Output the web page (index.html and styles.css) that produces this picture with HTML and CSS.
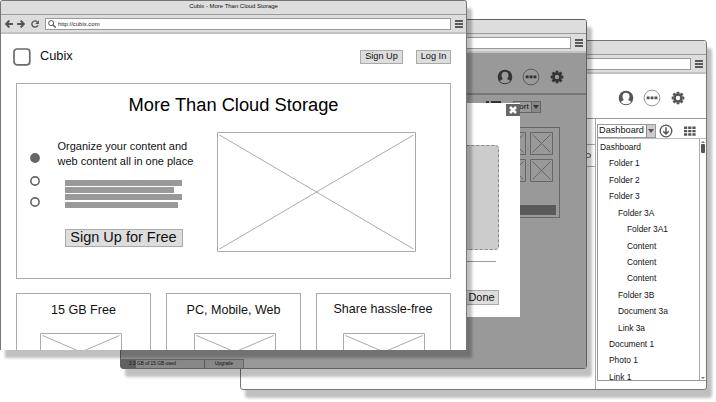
FILE: index.html
```html
<!DOCTYPE html>
<html lang="en">
<head>
<meta charset="utf-8">
<title>Cubix - More Than Cloud Storage</title>
<link rel="stylesheet" href="styles.css">
</head>
<body>
<svg class="defs" width="0" height="0" aria-hidden="true">
  <symbol id="user" viewBox="0 0 16 16"><path fill-rule="evenodd" d="M8 .7a7.300 7.300 0 1 0 0 14.600A7.300 7.300 0 0 0 8 .7zm0 2c2.300 0 3.500 1.500 3.500 3.700 0 1.600-.6 2.600-1.400 3.400.3.900 2.200.9 3.100 2.100A6.300 6.300 0 0 1 8 14.300a6.300 6.300 0 0 1-5.200-2.400c.9-1.200 2.800-1.200 3.100-2.100C5.100 9 4.500 8 4.500 6.400c0-2.200 1.200-3.700 3.500-3.700z" fill="currentColor"/></symbol>
  <symbol id="more" viewBox="0 0 18 18"><circle cx="9" cy="9" r="7.900" fill="none" stroke="currentColor" stroke-width=".6"/><path d="M3.700 7.500h2.900v2.800H3.700zM7.600 7.500h2.900v2.800H7.600zM11.500 7.500h2.900v2.800h-2.900z" fill="currentColor"/></symbol>
  <symbol id="gear" viewBox="0 0 16 16"><circle cx="8" cy="8" r="3.500" fill="none" stroke="currentColor" stroke-width="2.600"/><path d="M8 1.700v2M8 12.300v2M1.700 8h2M12.300 8h2M3.500 3.500l1.500 1.500M11 11l1.500 1.500M3.500 12.500l1.500-1.500M11 5l1.500-1.500" stroke="currentColor" stroke-width="2.800"/></symbol>
  <symbol id="arrow" viewBox="0 0 8 8"><path d="M4.300.6 1.100 4l3.200 3.400M1.200 4H8" fill="none" stroke="currentColor" stroke-width="2"/></symbol>
  <symbol id="reload" viewBox="0 0 8 8"><path d="M6.900 5.200A3.100 3.100 0 1 1 6.300 1.900" fill="none" stroke="currentColor" stroke-width="1.400"/><path d="M7.900.3v3.700H4.300z" fill="currentColor"/></symbol>
  <symbol id="search" viewBox="0 0 8 8"><circle cx="3.100" cy="3.100" r="2.500" fill="none" stroke="currentColor"/><path d="m4.900 4.900 2.800 2.600" stroke="currentColor" stroke-width="1.400"/></symbol>
  <symbol id="download" viewBox="0 0 14 14"><circle cx="7" cy="7" r="5.800" fill="none" stroke="currentColor" stroke-width="1.300"/><path d="M7 3.200V9M4.200 7.200 7 10l2.800-2.800" fill="none" stroke="currentColor" stroke-width="1.500"/></symbol>
  <symbol id="grid" viewBox="0 0 12 10"><path d="M0 .5h3.200v2.400H0zM4.200.5h3.200v2.400H4.200zM8.400.5h3.200v2.400H8.400zM0 3.900h3.200v2.400H0zM4.200 3.900h3.200v2.400H4.200zM8.400 3.900h3.200v2.400H8.400zM0 7.300h3.200v2.400H0zM4.200 7.300h3.200v2.400H4.200zM8.400 7.300h3.200v2.400H8.400z" fill="currentColor"/></symbol>
</svg>
<main class="desktop">

  <section class="window window-drive">
    <div class="titlebar"></div>
    <div class="toolbar"><div class="address"></div><i class="menu"></i></div>
    <div class="drive">
      <div class="app-head">
        <svg class="ic-user"><use href="#user"/></svg><svg class="ic-more"><use href="#more"/></svg><svg class="ic-gear"><use href="#gear"/></svg>
      </div>
      <div class="drive-body">
        <div class="side"><div class="side-top"></div><div class="side-tab"><i></i></div></div>
        <div class="tree">
          <div class="tree-tools">
            <div class="select select-tree"><span>Dashboard</span><b></b></div>
            <svg class="ic-download"><use href="#download"/></svg>
            <svg class="ic-grid"><use href="#grid"/></svg>
          </div>
          <div class="tree-list">
            <ul>
              <li>Dashboard</li><li class="l1">Folder 1</li><li class="l1">Folder 2</li><li class="l1">Folder 3</li>
              <li class="l2">Folder 3A</li><li class="l3">Folder 3A1</li><li class="l3">Content</li><li class="l3">Content</li><li class="l3">Content</li>
              <li class="l2">Folder 3B</li><li class="l2">Document 3a</li><li class="l2">Link 3a</li>
              <li class="l1">Document 1</li><li class="l1">Photo 1</li><li class="l1">Link 1</li>
            </ul>
            <div class="scroll"><i class="up"></i><i class="thumb"></i><i class="down"></i></div>
          </div>
        </div>
      </div>
    </div>
  </section>

  <section class="window window-upload">
    <div class="titlebar"></div>
    <div class="toolbar"><div class="address"></div><i class="menu"></i></div>
    <div class="dimmed">
      <div class="app-head">
        <svg class="ic-user"><use href="#user"/></svg><svg class="ic-more"><use href="#more"/></svg><svg class="ic-gear"><use href="#gear"/></svg>
      </div>
      <div class="sortbar"><div class="list-icon"><i></i><i></i></div><div class="select select-sort"><span>Sort</span><b></b></div></div>
      <div class="gallery">
        <div class="thumbs">
          <svg viewBox="0 0 23 23"><path d="M.5.5h22v22H.5zM2.500 2.500l18 18M20.500 2.500l-18 18"/></svg>
          <svg viewBox="0 0 23 23"><path d="M.5.5h22v22H.5zM2.500 2.500l18 18M20.500 2.500l-18 18"/></svg>
          <svg viewBox="0 0 23 23"><path d="M.5.5h22v22H.5zM2.500 2.500l18 18M20.500 2.500l-18 18"/></svg>
          <svg viewBox="0 0 23 23"><path d="M.5.5h22v22H.5zM2.500 2.500l18 18M20.500 2.500l-18 18"/></svg>
        </div>
        <div class="gallery-bar"></div>
      </div>
      <div class="status"><div class="usage"><span>2.3 GB of 15 GB used</span></div><div class="upgrade">Upgrade</div></div>
    </div>
    <div class="modal">
      <div class="modal-head"><div class="close"><svg viewBox="0 0 8 8"><path d="m1 1 6 6M7 1 1 7" stroke="#fff" stroke-width="2.600"/></svg></div></div>
      <div class="dropzone"></div>
      <div class="rule"></div>
      <div class="btn done">Done</div>
    </div>
  </section>

  <section class="window window-home">
    <div class="titlebar">Cubix - More Than Cloud Storage</div>
    <div class="toolbar">
      <svg class="nav back"><use href="#arrow"/></svg><svg class="nav forward"><use href="#arrow"/></svg><svg class="nav"><use href="#reload"/></svg>
      <div class="address"><svg class="nav"><use href="#search"/></svg><span>http://cubix.com</span></div><i class="menu"></i>
    </div>
    <div class="home">
      <header><svg class="logo" viewBox="0 0 18 18"><rect x="1" y="1" width="15.800" height="15.800" rx="3"/></svg><div class="brand">Cubix</div><div class="btn signup">Sign Up</div><div class="btn login">Log In</div></header>
      <div class="hero">
        <h1>More Than Cloud Storage</h1>
        <div class="hero-row">
          <div class="dots"><svg class="on" viewBox="0 0 10 10"><circle cx="5" cy="5" r="4.100"/></svg><svg viewBox="0 0 10 10"><circle cx="5" cy="5" r="4.100"/></svg><svg viewBox="0 0 10 10"><circle cx="5" cy="5" r="4.100"/></svg></div>
          <div class="pitch">
            <p>Organize your content and<br>web content all in one place</p>
            <div class="lines"><i></i><i class="short"></i><i></i><i class="mid"></i></div>
            <div class="btn free">Sign Up for Free</div>
          </div>
          <svg class="hero-img" viewBox="0 0 199 120"><path d="M.5.5h198v119H.5zM2.500 3l194 114M196.500 3l-194 114"/></svg>
        </div>
      </div>
      <div class="cards">
        <div class="card"><h2>15 GB Free</h2><svg viewBox="0 0 82 38"><path d="M.5.5h81v37H.5zM2.500 2.500l77 33M79.500 2.500l-77 33"/></svg></div>
        <div class="card"><h2>PC, Mobile, Web</h2><svg viewBox="0 0 82 38"><path d="M.5.5h81v37H.5zM2.500 2.500l77 33M79.500 2.500l-77 33"/></svg></div>
        <div class="card card-share"><h2>Share hassle-free</h2><svg viewBox="0 0 82 38"><path d="M.5.5h81v37H.5zM2.500 2.500l77 33M79.500 2.500l-77 33"/></svg></div>
      </div>
    </div>
  </section>
</main>
</body>
</html>
```
FILE: styles.css
```css
* { box-sizing: border-box; }
body { margin: 0; background: #fff; color: #111; font-family: "Liberation Sans", Arial, sans-serif; overflow: hidden; }
h1, h2, p, ul { margin: 0; padding: 0; font-weight: normal; }
li { list-style: none; }
svg { display: block; flex: none; }
i, b { display: block; flex: none; }
.defs { position: absolute; }
.desktop { position: relative; width: 716px; height: 402px; }

.window { position: absolute; width: 467px; height: 350px; border: 1px solid #757575; border-radius: 3px; background: #fff; box-shadow: 5px 8px 3px rgba(0, 0, 0, .25); display: flex; flex-direction: column; }
.window-home { left: 0; top: 0; border-bottom: 0; border-radius: 3px 3px 0 0; }
.window-upload { left: 120px; top: 19px; border-color: #606060; }
.window-drive { left: 240px; top: 40px; }

.titlebar { flex: none; height: 14px; background: #ddd; border-bottom: 1px solid #9a9a9a; border-radius: 2px 2px 0 0; text-align: center; font-size: 5.950px; line-height: 11px; }
.toolbar { flex: none; height: 19px; display: flex; align-items: center; padding: 1px 3px 1px 4px; background: #ddd; border-bottom: 2px solid #c4c4c4; color: #555; }
.nav { width: 8px; height: 8px; margin-right: 6px; }
.back { margin-right: 4px; }
.forward { transform: scaleX(-1); }
.address { flex: 1; height: 12px; border: 1px solid #999; background: #fff; display: flex; align-items: center; padding-left: 2px; color: #222; font-size: 5.950px; }
.address .nav { margin-right: 2px; color: #555; }
.menu { width: 8px; height: 8px; margin-left: 4px; background: repeating-linear-gradient(#5a5a5a 0 1.700px, #ddd 1.700px 3px); }
.btn { background: #ddd; border: 1px solid #aaa; text-align: center; white-space: nowrap; }

.home { flex: 1; overflow: hidden; padding: 0 15px; }
header { height: 49px; display: flex; align-items: center; padding-bottom: 3px; margin-left: -3px; }
.logo { width: 18px; height: 18px; }
.logo rect { fill: none; stroke: #6a6a6a; stroke-width: 1.700; }
.brand { flex: 1; margin: -3px 0 0 9px; font-size: 12.800px; }
.signup, .login { height: 14px; font-size: 9.200px; line-height: 11px; }
.signup { width: 43px; }
.login { width: 35px; margin-left: 13px; }
.hero { height: 196px; border: 1px solid #aaa; }
h1 { height: 48px; text-align: center; font-size: 18.300px; line-height: 42px; color: #000; transform: scaleY(1.040); }
.hero-row { display: flex; }
.dots { width: 40.500px; padding: 21px 0 0 12.500px; display: flex; flex-direction: column; }
.dots svg { width: 10px; height: 10px; margin-bottom: 11px; fill: none; stroke: #666; stroke-width: 1.600; }
.dots .on { fill: #666; margin-bottom: 13px; }
.pitch { width: 159.500px; padding-top: 7px; }
.pitch p { font-size: 11px; line-height: 15px; white-space: nowrap; }
.lines { padding: 11px 0 0 7px; }
.lines i { width: 117px; height: 6px; margin-bottom: 1.200px; background: #999; }
.lines .short { width: 109px; }
.lines .mid { width: 113px; }
.free { width: 118px; height: 18px; margin: 21px 0 0 7px; font-size: 14.500px; line-height: 15px; }
.hero-img { width: 199px; height: 120px; }
.hero-img path, .card path { fill: none; stroke: #aaa; stroke-width: 1; }
.cards { display: grid; grid-template-columns: repeat(3, 135px); gap: 15px; margin-top: 14px; }
.card { height: 90px; border: 1px solid #aaa; display: flex; flex-direction: column; align-items: center; }
.card h2 { height: 39px; font-size: 12.550px; line-height: 32px; white-space: nowrap; }
.card svg { width: 82px; height: 38px; margin-left: -5px; }
.card:nth-child(2) svg { margin-left: 3px; }
.card.card-share svg { margin-left: 0; }
.card-share h2 { line-height: 30px; margin-left: -1px; }

.app-head { display: flex; justify-content: flex-end; align-items: center; gap: 9px; color: #555; }
.ic-user, .ic-gear { width: 16px; height: 16px; }
.ic-more { width: 18px; height: 18px; }
.select { display: flex; border: 1px solid #999; white-space: nowrap; }
.select span { flex: 1; }
.select b { width: 9px; border-left: 1px solid #888; background: #ccc; display: flex; align-items: center; justify-content: center; }
.select b::after { content: ""; border: 3px solid transparent; border-top: 4px solid #555; border-bottom: 0; }

.dimmed { flex: 1; background: #999; display: flex; flex-direction: column; align-items: flex-end; }
.dimmed .app-head { width: 100%; height: 42px; padding: 8px 21px 0 0; color: #333; border-bottom: 2px solid #777; }
.sortbar { display: flex; align-items: flex-start; height: 32px; padding: 6px 45px 0 0; }
.list-icon { width: 15px; margin-right: 12px; display: flex; justify-content: space-between; }
.list-icon i { width: 3px; height: 2px; background: #333; }
.list-icon i + i { width: 10px; }
.select-sort { width: 28px; height: 12px; border-color: #666; font-size: 8px; line-height: 10px; }
.select-sort b { border-color: #666; background: #888; }
.select-sort b::after { border-top-color: #333; }
.gallery { width: 360px; height: 91px; margin-right: 26px; border: 1px solid #666; padding: 4px 3px 0 0; display: flex; flex-direction: column; align-items: flex-end; }
.thumbs { display: grid; grid-template-columns: 23px 23px; gap: 4px; margin-right: 3px; }
.thumbs svg { width: 23px; height: 23px; }
.thumbs path { fill: none; stroke: #666; }
.gallery-bar { width: 350px; height: 10px; margin-top: 23px; background: #5a5a5a; }
.status { width: 123px; height: 9px; margin: auto auto 0 0; display: flex; border-top: 1px solid #666; border-right: 1px solid #666; background: #888; color: #111; font-size: 4.800px; line-height: 7px; white-space: nowrap; }
.usage { width: 84px; padding-left: 8px; border-right: 1px solid #555; background: linear-gradient(90deg, #606060 15px, #888 15px); }
.upgrade { flex: 1; text-align: center; }
.modal { position: absolute; left: 66px; top: 83px; width: 333px; height: 214px; background: #fff; padding-right: 21px; }
.modal-head { height: 42px; margin-right: -21px; display: flex; justify-content: flex-end; padding-top: 1px; }
.close { width: 14px; height: 12px; background: #666; display: flex; align-items: center; justify-content: center; }
.close svg { width: 8px; height: 8px; }
.dropzone { height: 105px; margin-left: 20px; background: #ccc; border: 1px dashed #888; border-radius: 4px; }
.rule { height: 1px; margin: 11px 3px 0 20px; background: #999; }
.done { width: 35px; height: 15px; margin: 28px 0 0 auto; font-size: 10.900px; line-height: 12px; }

.drive { flex: 1; }
.drive .app-head { height: 45px; padding: 4px 20px 0 0; border-bottom: 1px solid #999; }
.drive-body { display: flex; }
.side { width: 355px; height: 270px; border-right: 1px solid #aaa; }
.side-top { height: 26px; border-bottom: 1px solid #aaa; }
.side-tab { height: 22px; border-bottom: 1px solid #aaa; display: flex; align-items: center; justify-content: flex-end; padding-right: 4px; }
.side-tab i { width: 6px; height: 5px; border: 1px solid #666; border-radius: 50%; }
.tree { flex: 1; padding-left: 1px; }
.tree-tools { height: 19px; display: flex; align-items: center; padding: 5px 0 0; color: #555; }
.select-tree { width: 59px; height: 14px; color: #111; font-size: 9.200px; line-height: 11px; padding-left: 1px; }
.ic-download { width: 14px; height: 14px; margin-left: 3px; }
.ic-grid { width: 12px; height: 10px; margin-left: 11px; }
.tree-list { height: 243px; display: flex; border: 1px solid #999; border-right: 0; border-top-color: #bbb; overflow: hidden; }
.tree-list ul { flex: 1; font-size: 8.400px; padding-left: 2px; }
.tree-list li { height: 16.430px; line-height: 16.430px; white-space: nowrap; }
.l1 { padding-left: 9px; }
.l2 { padding-left: 18px; }
.l3 { padding-left: 27px; }
.scroll { width: 7px; border-left: 1px solid #aaa; display: flex; flex-direction: column; align-items: center; padding: 2px 0 1px; }
.up { border: 2px solid transparent; border-bottom: 2px solid #777; border-top: 0; }
.thumb { width: 4px; height: 9px; margin-top: 1px; border-radius: 1px; background: #555; }
.down { margin-top: auto; border: 2px solid transparent; border-top: 2px solid #777; border-bottom: 0; }
```
